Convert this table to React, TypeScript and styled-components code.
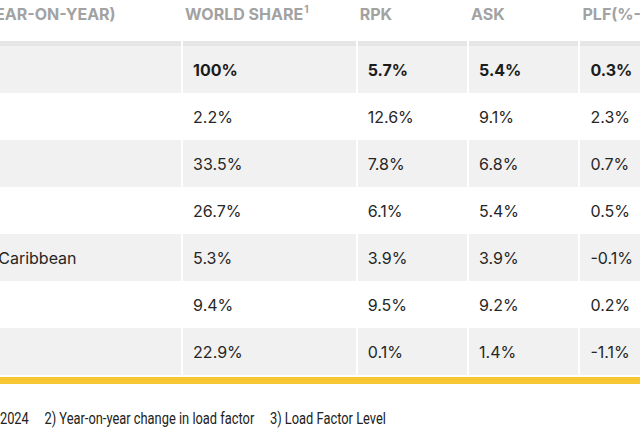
import styled, { createGlobalStyle } from "styled-components";

const GlobalStyle = createGlobalStyle`
  html, body {
    margin: 0;
    padding: 0;
    background: #ffffff;
  }
  body {
    width: 640px;
    height: 428px;
    overflow: hidden;
    font-family: Inter, "Liberation Sans", sans-serif;
    color: #222222;
  }
`;

const Frame = styled.div`
  width: 640px;
  height: 428px;
  overflow: hidden;
`;

const Sheet = styled.div`
  margin-left: -137px;
  width: 900px;
`;

const TableWrap = styled.div`
  padding-bottom: 2px;
  border-bottom: 7px solid #f6c733;
`;

const Table = styled.table`
  border-collapse: separate;
  border-spacing: 2px 0;
  table-layout: fixed;
  width: 860px;
  font-size: 16px;
`;

const HeadCell = styled.th`
  height: 37px;
  padding: 4px 0 0 2px;
  vertical-align: top;
  text-align: left;
  font-weight: 700;
  font-size: 16px;
  color: #a2a2a2;
  text-transform: uppercase;
  white-space: nowrap;
  border-bottom: 5px solid #e6e6e6;
  background: #ffffff;

  sup {
    font-size: 10px;
    vertical-align: 7px;
    line-height: 0;
    margin-left: 1px;
  }
`;

const Row = styled.tr<{ $shaded: boolean; $total?: boolean }>`
  height: 47px;
  background: ${(p) => (p.$shaded ? "#f1f1f1" : "#ffffff")};
  font-weight: ${(p) => (p.$total ? 700 : 400)};
  color: ${(p) => (p.$total ? "#1c1c1c" : "#262626")};
`;

const Cell = styled.td`
  padding: 0 0 0 10px;
  vertical-align: middle;
  white-space: nowrap;
  background: inherit;
`;

const Footnotes = styled.div`
  display: flex;
  gap: 20px;
  margin-left: -3px;
  padding: 25px 0 0 1px;
  font-family: Roboto, "Liberation Sans", sans-serif;
  font-size: 16.5px;
  color: #222222;
  white-space: nowrap;
  transform: scaleX(0.78);
  transform-origin: left top;
`;

type Region = {
  name: string;
  share: string;
  rpk: string;
  ask: string;
  plf: string;
  total?: boolean;
};

const regions: Region[] = [
  { name: "Total Market", share: "100%", rpk: "5.7%", ask: "5.4%", plf: "0.3%", total: true },
  { name: "Africa", share: "2.2%", rpk: "12.6%", ask: "9.1%", plf: "2.3%" },
  { name: "Asia Pacific", share: "33.5%", rpk: "7.8%", ask: "6.8%", plf: "0.7%" },
  { name: "Europe", share: "26.7%", rpk: "6.1%", ask: "5.4%", plf: "0.5%" },
  { name: "Latin America & Caribbean", share: "5.3%", rpk: "3.9%", ask: "3.9%", plf: "-0.1%" },
  { name: "Middle East", share: "9.4%", rpk: "9.5%", ask: "9.2%", plf: "0.2%" },
  { name: "North America", share: "22.9%", rpk: "0.1%", ask: "1.4%", plf: "-1.1%" },
];

export default function App() {
  return (
    <Frame>
      <GlobalStyle />
      <Sheet>
        <TableWrap>
          <Table>
            <colgroup>
              <col style={{ width: 315 }} />
              <col style={{ width: 172 }} />
              <col style={{ width: 109 }} />
              <col style={{ width: 109 }} />
              <col style={{ width: 140 }} />
            </colgroup>
            <thead>
              <tr>
                <HeadCell>Region 2024 (Year-on-Year)</HeadCell>
                <HeadCell>
                  World Share<sup>1</sup>
                </HeadCell>
                <HeadCell>RPK</HeadCell>
                <HeadCell>ASK</HeadCell>
                <HeadCell>
                  PLF(%-PT)<sup>2</sup>
                </HeadCell>
              </tr>
            </thead>
            <tbody>
              {regions.map((r, i) => (
                <Row key={r.name} $shaded={i % 2 === 0} $total={r.total}>
                  <Cell>{r.name}</Cell>
                  <Cell>{r.share}</Cell>
                  <Cell>{r.rpk}</Cell>
                  <Cell>{r.ask}</Cell>
                  <Cell>{r.plf}</Cell>
                </Row>
              ))}
            </tbody>
          </Table>
        </TableWrap>
        <Footnotes>
          <span>1) % of industry RPKs in 2024</span>
          <span>2) Year-on-year change in load factor</span>
          <span>3) Load Factor Level</span>
        </Footnotes>
      </Sheet>
    </Frame>
  );
}
